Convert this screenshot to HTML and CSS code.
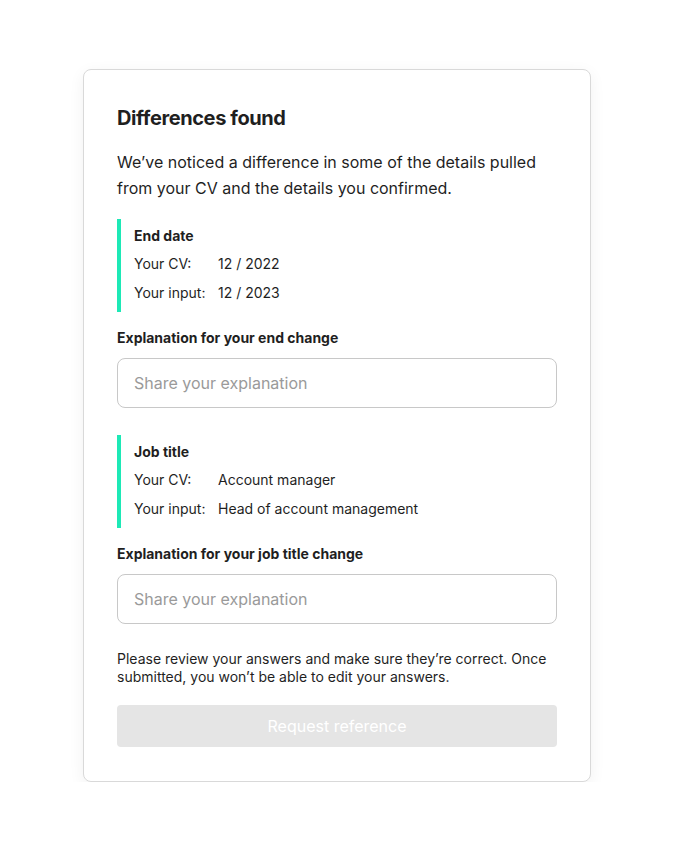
FILE: index.html
```html
<!DOCTYPE html>
<html lang="en">
<head>
<meta charset="utf-8">
<title>Differences found</title>
<link rel="stylesheet" href="styles.css">
</head>
<body>
<main class="page">
  <section class="card">
    <h1 class="title">Differences found</h1>
    <p class="intro">We’ve noticed a difference in some of the details pulled from your CV and the details you confirmed.</p>

    <div class="diff">
      <div class="diff-title">End date</div>
      <div class="diff-row"><span class="diff-key">Your CV:</span><span>12 / 2022</span></div>
      <div class="diff-row"><span class="diff-key">Your input:</span><span>12 / 2023</span></div>
    </div>
    <label class="field-label" for="e1">Explanation for your end change</label>
    <input class="field" id="e1" type="text" placeholder="Share your explanation">

    <div class="diff diff-next">
      <div class="diff-title">Job title</div>
      <div class="diff-row"><span class="diff-key">Your CV:</span><span>Account manager</span></div>
      <div class="diff-row"><span class="diff-key">Your input:</span><span>Head of account management</span></div>
    </div>
    <label class="field-label" for="e2">Explanation for your job title change</label>
    <input class="field" id="e2" type="text" placeholder="Share your explanation">

    <p class="note">Please review your answers and make sure they’re correct. Once submitted, you won’t be able to edit your answers.</p>
    <button class="btn" type="button" disabled>Request reference</button>
  </section>
</main>
</body>
</html>
```
FILE: styles.css
```css
* { box-sizing: border-box; }
html, body { margin: 0; padding: 0; background: #fff; }
body {
  font-family: Inter, "Noto Sans", Arial, sans-serif;
  color: #1f1f1f;
}
.page {
  padding: 69px 0 0 83px;
}
.card {
  width: 508px;
  border: 1px solid #d9d9d9;
  border-radius: 8px;
  background: #fff;
  box-shadow: 0 4px 16px rgba(0,0,0,0.06);
  padding: 34px 33px 34px 33px;
  display: flex;
  flex-direction: column;
}
.title {
  margin: 0;
  font-size: 20px;
  line-height: 28px;
  font-weight: 700;
  letter-spacing: -0.4px;
}
.intro {
  margin: 17px 0 0;
  font-size: 16px;
  line-height: 26px;
}
.diff {
  margin-top: 18px;
  border-left: 4px solid #1de9b6;
  padding: 7px 0 5px 13px;
  display: flex;
  flex-direction: column;
}
.diff-next { margin-top: 27px; }
.diff-title {
  font-size: 14px;
  font-weight: 700;
  line-height: 20px;
  margin-bottom: 3px;
}
.diff-row {
  display: flex;
  font-size: 14px;
  line-height: 29px;
}
.diff-key {
  width: 84px;
  flex: none;
}
.field-label {
  margin-top: 16px;
  font-size: 14px;
  font-weight: 700;
  line-height: 20px;
}
.field {
  margin-top: 10px;
  height: 50px;
  width: 100%;
  border: 1px solid #c8c8c8;
  border-radius: 8px;
  padding: 0 16px;
  font-family: inherit;
  font-size: 16px;
  color: #1f1f1f;
  outline: none;
}
.field::placeholder { color: #9a9a9a; }
.note {
  margin: 26px 0 0;
  font-size: 14px;
  line-height: 18px;
}
.btn {
  margin-top: 19px;
  height: 42px;
  width: 100%;
  border: none;
  border-radius: 4px;
  background: #e5e5e5;
  color: #fff;
  font-family: inherit;
  font-size: 16px;
}
```
